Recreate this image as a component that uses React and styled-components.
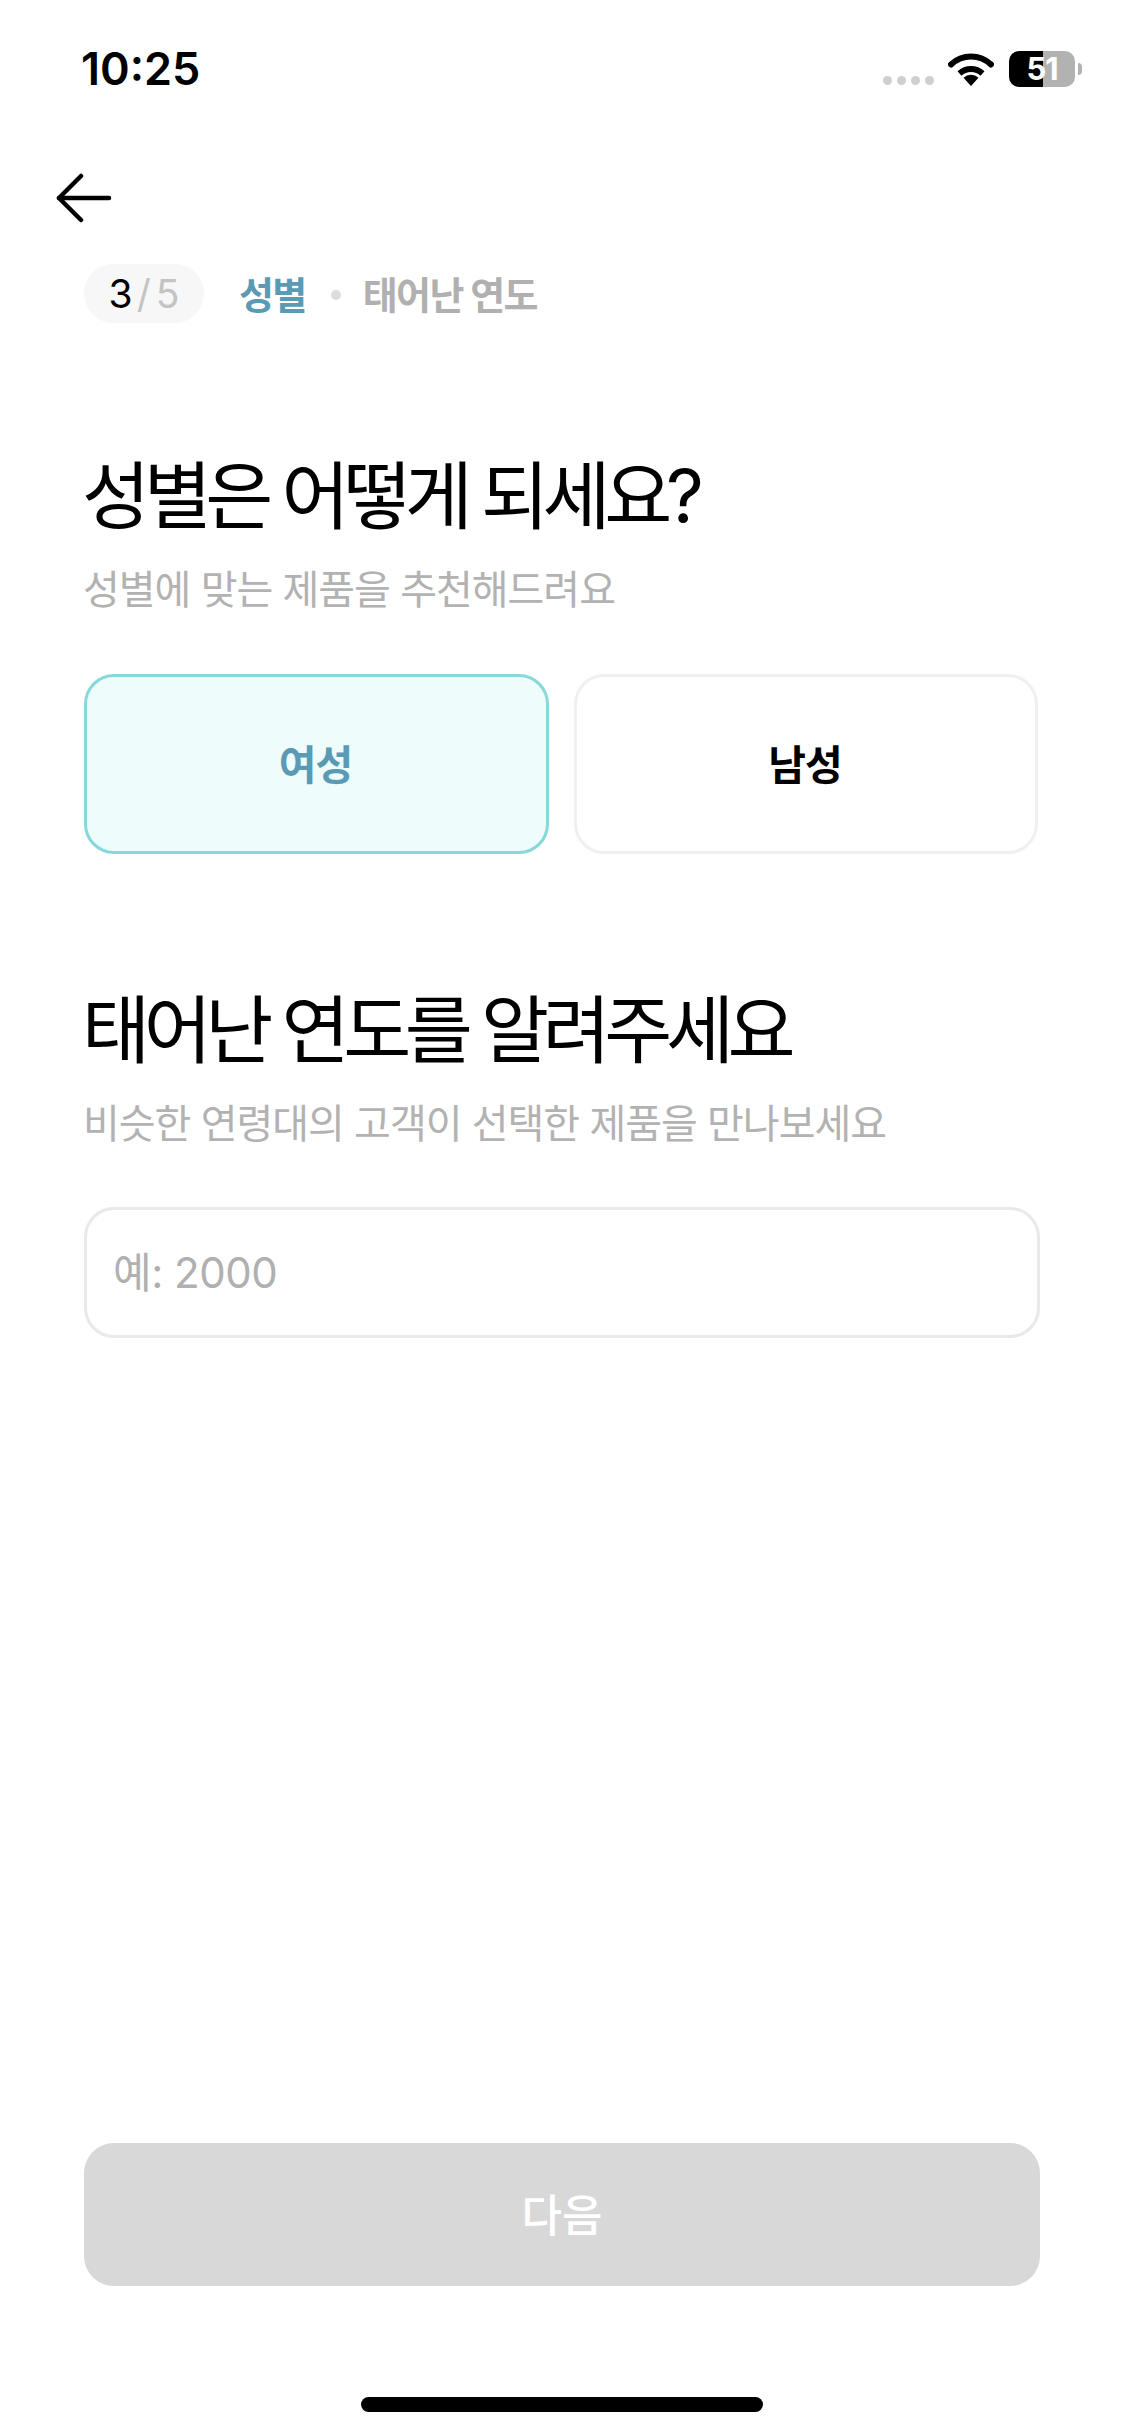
import React, { useState } from 'react'
import styled, { createGlobalStyle } from 'styled-components'

const Global = createGlobalStyle`
  html, body { margin: 0; padding: 0; background: #fff; }
  * { box-sizing: border-box; }
  body { font-family: "Inter", "Noto Sans CJK KR", sans-serif; }
`

const Screen = styled.div`
  width: 1125px;
  height: 2436px;
  display: flex;
  flex-direction: column;
  background: #fff;
  font-family: "Inter", "Noto Sans CJK KR", sans-serif;
  color: #000;
`

const StatusBar = styled.div`
  height: 173px;
  padding: 45px 43px 0 81px;
  display: flex;
  justify-content: space-between;
  align-items: flex-start;
`

const Time = styled.span`
  font-size: 45px;
  line-height: 48px;
  font-weight: 600;
`

const StatusIcons = styled.div`
  display: flex;
  align-items: center;
  margin-top: 6px;
`

const SignalDots = styled.div`
  display: flex;
  gap: 5px;
  margin: 23px 14px 0 0;
`

const SignalDot = styled.i`
  width: 9px;
  height: 9px;
  border-radius: 50%;
  background: #cfcfcf;
`

const Battery = styled.div`
  width: 66px;
  height: 36px;
  margin-left: 15px;
  border-radius: 10px;
  background: linear-gradient(to right, #000 0 52%, #b2b2b2 52% 100%);
  color: #fff;
  font-size: 31px;
  font-weight: 700;
  line-height: 36px;
  text-align: center;
  letter-spacing: -1px;
`

const BatteryTip = styled.i`
  width: 4px;
  height: 12px;
  margin-left: 3px;
  border-radius: 0 6px 6px 0;
  background: #b2b2b2;
`

const BackButton = styled.button`
  width: 56px;
  height: 50px;
  margin-left: 56px;
  padding: 0;
  border: 0;
  background: none;
  display: block;
`

const Content = styled.main`
  flex: 1;
  display: flex;
  flex-direction: column;
  padding: 0 85px 0 84px;
`

const Steps = styled.div`
  display: flex;
  align-items: center;
  margin-top: 41px;
  height: 59px;
`

const StepCount = styled.div`
  width: 120px;
  height: 59px;
  border-radius: 30px;
  background: #f7f7f7;
  display: flex;
  align-items: center;
  justify-content: center;
  font-size: 39px;
  color: #c4c4c4;
  margin-right: 35px;
`

const Current = styled.span`
  color: #000;
`

const Slash = styled.span`
  margin: 0 5px 0 4px;
`

const StepName = styled.span`
  font-size: 38px;
  font-weight: 700;
  letter-spacing: -1.6px;
  padding-bottom: 3px;
  color: ${p => (p.$active ? '#5a9ab5' : '#b0b0b0')};
`

const StepDot = styled.i`
  width: 10px;
  height: 10px;
  border-radius: 50%;
  margin: 2px 22px 0 25px;
  background: #dcdcdc;
`

const Heading = styled.h1`
  margin: ${p => p.$top}px 0 0 -2px;
  font-size: 74px;
  line-height: 90px;
  font-weight: 400;
  letter-spacing: -6.4px;
`

const Sub = styled.p`
  margin: 21px 0 0 -1px;
  font-size: 40px;
  line-height: 56px;
  font-weight: 400;
  letter-spacing: -1px;
  color: #b2b2b2;
`

const Options = styled.div`
  display: grid;
  grid-template-columns: 465px 464px;
  gap: 25px;
  margin-top: 56px;
`

const Option = styled.button`
  height: 180px;
  border-radius: 30px;
  border: 3px solid ${p => (p.$selected ? '#86d8da' : '#f0f0f0')};
  background: ${p => (p.$selected ? '#eefcfc' : '#fff')};
  color: ${p => (p.$selected ? '#5a9ab5' : '#000')};
  font-family: inherit;
  font-size: 41px;
  font-weight: 700;
  letter-spacing: -1px;
  padding: 0 2px 4px 0;
`

const YearInput = styled.input`
  width: 956px;
  height: 131px;
  margin-top: 55px;
  padding: 0 26px;
  border-radius: 30px;
  border: 3px solid #e9e9e9;
  background: #fff;
  font-family: inherit;
  font-size: 42px;
  letter-spacing: -0.5px;
  outline: none;
  &::placeholder { color: #b0b0b0; opacity: 1; }
`

const NextButton = styled.button`
  width: 956px;
  height: 143px;
  margin-top: auto;
  border: 0;
  border-radius: 30px;
  background: #d8d8d8;
  color: #fff;
  font-family: inherit;
  font-size: 44px;
  font-weight: 500;
  padding: 0 0 3px;
`

const HomeBar = styled.div`
  width: 402px;
  height: 15px;
  margin: 111px auto 24px;
  border-radius: 8px;
  background: #000;
`

export default function App() {
  const [year, setYear] = useState('')
  return (
    <Screen>
      <Global />
      <StatusBar>
        <Time>10:25</Time>
        <StatusIcons>
          <SignalDots>
            <SignalDot /><SignalDot /><SignalDot /><SignalDot />
          </SignalDots>
          <svg width="46" height="33" viewBox="0 0 46 33">
            <path d="M23 33l-7.5-8.2a11 11 0 0 1 15 0z" fill="#000" />
            <path d="M11.5 20.5a17 17 0 0 1 23 0" fill="none" stroke="#000" strokeWidth="6" />
            <path d="M3 11.5a29 29 0 0 1 40 0" fill="none" stroke="#000" strokeWidth="6" strokeLinecap="round" />
          </svg>
          <Battery>51</Battery>
          <BatteryTip />
        </StatusIcons>
      </StatusBar>
      <BackButton aria-label="back">
        <svg width="56" height="50" viewBox="0 0 56 50" fill="none" stroke="#000" strokeWidth="4.5" strokeLinecap="round" strokeLinejoin="round">
          <path d="M25 3L3 25l22 22" />
          <path d="M3 25h50" />
        </svg>
      </BackButton>
      <Content>
        <Steps>
          <StepCount>
            <Current>3</Current>
            <Slash>/</Slash>
            5
          </StepCount>
          <StepName $active>성별</StepName>
          <StepDot />
          <StepName>태어난 연도</StepName>
        </Steps>
        <Heading $top={128}>성별은 어떻게 되세요?</Heading>
        <Sub>성별에 맞는 제품을 추천해드려요</Sub>
        <Options>
          <Option $selected>여성</Option>
          <Option>남성</Option>
        </Options>
        <Heading $top={131}>태어난 연도를 알려주세요</Heading>
        <Sub>비슷한 연령대의 고객이 선택한 제품을 만나보세요</Sub>
        <YearInput placeholder="예: 2000" value={year} onChange={e => setYear(e.target.value)} />
        <NextButton disabled>다음</NextButton>
        <HomeBar />
      </Content>
    </Screen>
  )
}
